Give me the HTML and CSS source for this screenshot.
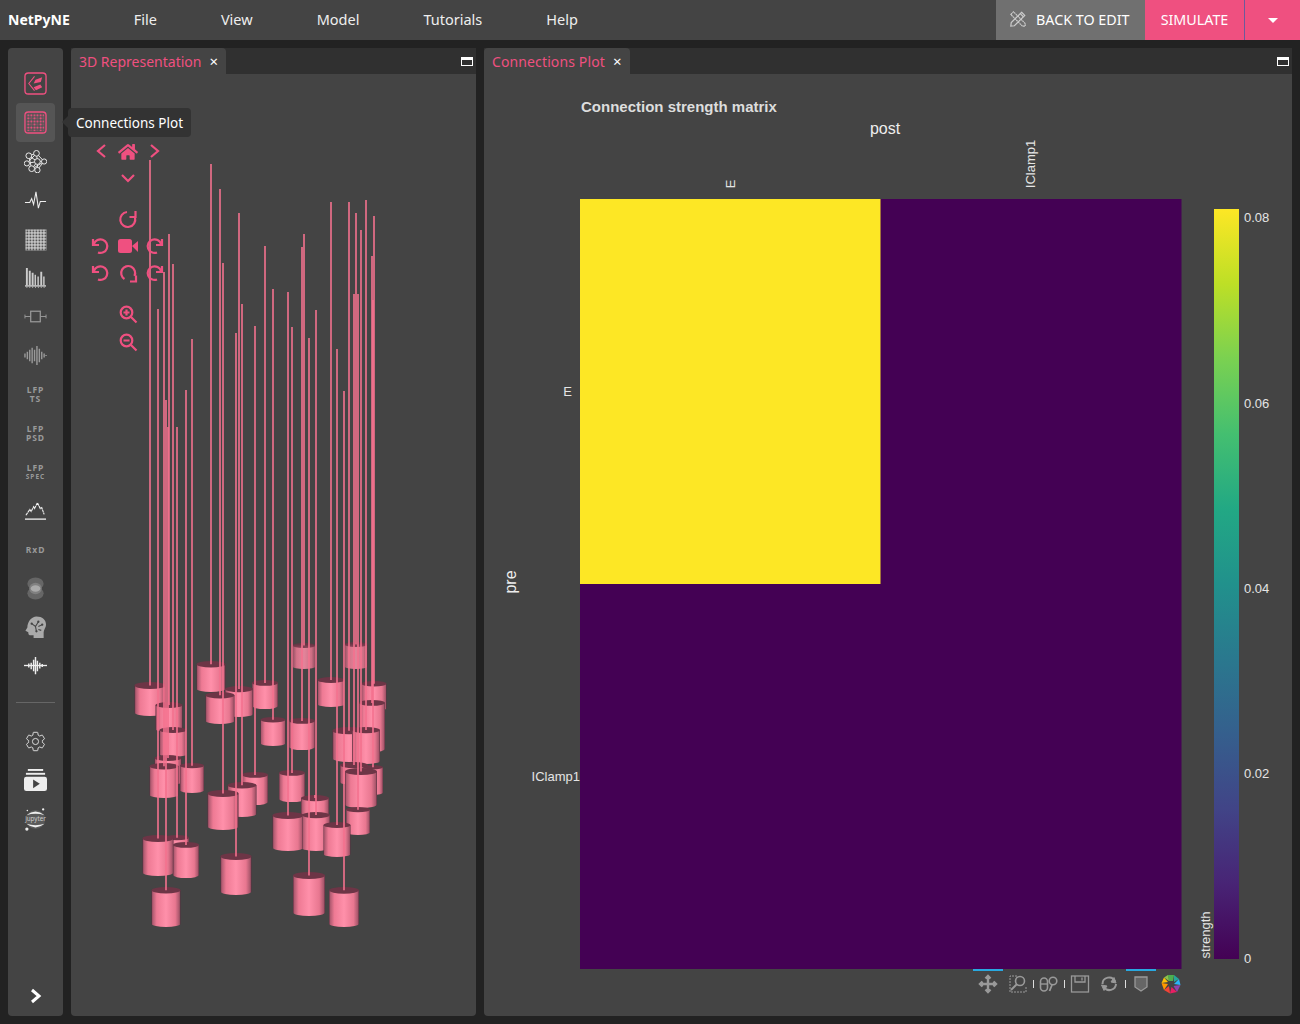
FILE: index.html
```html
<!DOCTYPE html>
<html lang="en">
<head>
  <meta charset="UTF-8">
  <meta name="viewport" content="width=device-width, initial-scale=1.0">
  <title>NetPyNE</title>
  <link rel="stylesheet" href="styles.css">
</head>
<body>
<header class="topbar">
  <nav class="menu">
    <span class="brand">NetPyNE</span>
    <span>File</span>
    <span>View</span>
    <span>Model</span>
    <span>Tutorials</span>
    <span>Help</span>
  </nav>
  <div class="actions">
    <div class="btn-edit">
      <svg class="edit-icon" viewBox="0 0 20 20">
        <g fill="none" stroke="#ccc" stroke-width="1.3">
          <path d="M2 5 L5 2 L18 15 L18 18 L15 18 Z" stroke-dasharray="2 .6"/>
          <path d="M14 2.5 L17.5 6 L6 17.5 L2 18 L2.5 14 Z"/>
          <path d="M12.5 4 L16 7.5"/>
        </g>
      </svg>
      BACK TO EDIT
    </div>
    <div class="btn-simulate">SIMULATE</div>
    <div class="btn-caret"><span class="caret"></span></div>
  </div>
</header>

<main class="workspace">
  <aside class="sidebar">
    <div class="side-item">
      <svg viewBox="0 0 24 24" class="side-icon"><rect x="1" y="1" width="22" height="22" rx="3.5" fill="none" stroke="#ef5080" stroke-width="1.4"/><path d="M11 4.500 L5 12 L11 19.500" fill="none" stroke="#ef5080" stroke-width="1.1"/><path d="M12 8 L19 5.500 L17.500 10.500 L10 12 Z M10 16 L17 13 L19 16 L12.500 19 Z" fill="#ef5080"/></svg>
    </div>
    <div class="side-item active">
      <svg viewBox="0 0 24 24" class="side-icon">
        <defs>
          <pattern id="dots" x="2.900" y="2.900" width="6.400" height="6.400" patternUnits="userSpaceOnUse">
            <path d="M1.600 .4 V2.800 M.4 1.600 H2.800 M4.800 .4 V2.800 M3.600 1.600 H6 M1.600 3.600 V6 M.4 4.800 H2.800" stroke="#ef5080" stroke-width="1"/>
            <circle cx="4.800" cy="4.800" r=".8" fill="none" stroke="#ef5080" stroke-width=".35"/>
          </pattern>
        </defs>
        <rect x="1" y="1" width="22" height="22" rx="3.5" fill="none" stroke="#ef5080" stroke-width="1.4"/>
        <rect x="2.900" y="2.900" width="18.200" height="18.200" fill="url(#dots)"/>
      </svg>
      <div class="tooltip">Connections Plot</div>
    </div>
    <div class="side-item">
      <svg viewBox="0 0 24 24" class="side-icon"><g fill="none" stroke="#eee" stroke-width="1"><path d="M5 6 L14 12 L8 20 L5 6 M13 3.5 L5 6 M13 3.5 L14 12 L21 12 L13 3.5 M3 14 L14 12 M3 14 L8 20 M3 14 L13 3.5 M14 20.500 L14 12 M14 20.500 L21 12 M8 20 L21 12"/><g fill="#444"><circle cx="5" cy="6" r="3"/><circle cx="13" cy="3.500" r="3"/><circle cx="21" cy="12" r="2.700"/><circle cx="14" cy="12" r="3"/><circle cx="3" cy="14" r="2.700"/><circle cx="8" cy="19.500" r="3"/><circle cx="14" cy="21" r="2.800"/></g></g></svg>
    </div>
    <div class="side-item">
      <svg viewBox="0 0 24 24" class="side-icon"><path d="M1 14 H6 L8 10 L10 16 L12.500 3 L15 20 L17 13 H23" fill="none" stroke="#eee" stroke-width="1.100"/></svg>
    </div>
    <div class="side-item">
      <svg viewBox="0 0 24 24" class="side-icon">
        <defs><pattern id="grid" width="3.130" height="3.130" patternUnits="userSpaceOnUse" x="1.500" y="1.500"><rect width="3.130" height="3.130" fill="#ddd"/><rect x="1.050" y="1.050" width="2.080" height="2.080" fill="#555"/></pattern></defs>
        <rect x="1.500" y="1.500" width="21.900" height="21.900" fill="url(#grid)"/>
      </svg>
    </div>
    <div class="side-item">
      <svg viewBox="0 0 24 24" class="side-icon"><path d="M2 20 V2 H4 V20 Z M5 20 V5 H7 V20 Z M8 20 V7 H10 V20 Z M11 20 V9 H12.500 V20 Z M14 20 V11 H15.500 V20 Z M17 20 V6 H19 V20 Z M20 20 V11 H21.500 V20 Z" fill="#ccc"/><path d="M1 20.800 H23" stroke="#eee" stroke-width="1.200"/><path d="M3 21 v2 M6 21 v2 M9 21 v2 M12 21 v2 M15 21 v2 M18 21 v2 M21 21 v2" stroke="#aaa"/></svg>
    </div>
    <div class="side-item dim">
      <svg viewBox="0 0 24 24" class="side-icon"><path d="M1 10 V14 M1 12 H7 M17 12 H23 M23 10 V14" stroke="#999" fill="none"/><rect x="7" y="6.500" width="10" height="11" fill="none" stroke="#999" stroke-width="1.300"/></svg>
    </div>
    <div class="side-item dim">
      <svg viewBox="0 0 24 24" class="side-icon"><path d="M1 10 V14 M3.500 8 V16 M6 6 V18 M8.500 4 V20 M11 6 V18 M13.500 2 V22 M16 5 V19 M18.500 8 V16 M21 10 V14 M23 11.500 V12.500" stroke="#999" stroke-width="1.500"/></svg>
    </div>
    <div class="side-item dim side-text"><span>LFP</span><span>TS</span></div>
    <div class="side-item dim side-text"><span>LFP</span><span>PSD</span></div>
    <div class="side-item dim side-text"><span>LFP</span><span class="tiny">SPEC</span></div>
    <div class="side-item">
      <svg viewBox="0 0 24 24" class="side-icon"><path d="M2 17 L6 11 L7.500 13 L10 8 L11 10 L14 4 L17 10 L18.500 9 L21 16" fill="none" stroke="#eee" stroke-width="1.200" stroke-dasharray="3 .5"/><path d="M1 21 H23" stroke="#eee" stroke-width="1.400"/></svg>
    </div>
    <div class="side-item dim side-text"><span>RxD</span></div>
    <div class="side-item dim">
      <svg viewBox="0 0 24 24" class="side-icon"><ellipse cx="12" cy="7" rx="8.500" ry="6.500" fill="#666"/><ellipse cx="12" cy="17" rx="8.500" ry="6.500" fill="#666"/><ellipse cx="12" cy="12" rx="6.500" ry="6" fill="#808080"/><ellipse cx="12" cy="12" rx="5" ry="3.500" fill="#aaa"/></svg>
    </div>
    <div class="side-item dim">
      <svg viewBox="0 0 24 24" class="side-icon"><path d="M13 0.500 C19 0.500 23 4 23 9 C23 12 20.500 14 20.500 17 L20.500 23 L10 23 L10 20 L6 20 C4.500 20 4.500 18 4.500 17 L1.500 15.500 L3.500 12 C3.500 6 8 0.500 13 0.500 Z" fill="#aaa"/><path d="M8 8 L12 11 L15 6 M12 11 L13 16 M15 11 L19 9 M15 14 L18 15" stroke="#444" stroke-width="1.100" fill="none"/><circle cx="8" cy="8" r="1.200" fill="#444"/><circle cx="15" cy="6" r="1.200" fill="#444"/><circle cx="13" cy="16" r="1.200" fill="#444"/><circle cx="19" cy="9" r="1.200" fill="#444"/></svg>
    </div>
    <div class="side-item">
      <svg viewBox="0 0 24 24" class="side-icon"><path d="M0 12 H24" stroke="#eee" stroke-width="1.400"/><path d="M5 10 V14 M7.500 9 V16 M10 6 V18 M12 3 V21 M14 7 V18 M16.500 9 V15 M19 10.500 V13.500" stroke="#eee" stroke-width="1.500"/></svg>
    </div>

    <div class="side-rule"></div>

    <div class="side-item">
      <svg viewBox="0 0 24 24" class="side-icon"><path d="M19.14 12.94c.04-.3.06-.61.06-.94 0-.32-.02-.64-.07-.94l2.03-1.58c.18-.14.23-.41.12-.61l-1.92-3.32c-.12-.22-.37-.29-.59-.22l-2.39.96c-.5-.38-1.03-.7-1.62-.94l-.36-2.54c-.04-.24-.24-.41-.48-.41h-3.84c-.24 0-.43.17-.47.41l-.36 2.54c-.59.24-1.13.57-1.62.94l-2.39-.96c-.22-.08-.47 0-.59.22L2.74 8.87c-.12.21-.08.47.12.61l2.03 1.58c-.05.3-.09.63-.09.94s.02.64.07.94l-2.03 1.58c-.18.14-.23.41-.12.61l1.92 3.32c.12.22.37.29.59.22l2.39-.96c.5.38 1.03.7 1.62.94l.36 2.54c.05.24.24.41.48.41h3.84c.24 0 .44-.17.47-.41l.36-2.54c.59-.24 1.13-.56 1.62-.94l2.39.96c.22.08.47 0 .59-.22l1.92-3.32c.12-.22.07-.47-.12-.61l-2.01-1.58z" fill="none" stroke="#eee" stroke-width=".9"/><circle cx="12" cy="12" r="3.200" fill="none" stroke="#eee" stroke-width=".9"/></svg>
    </div>
    <div class="side-item">
      <svg viewBox="0 0 24 24" class="side-icon"><rect x="4" y="0" width="16" height="2" fill="#eee"/><rect x="2" y="4" width="20" height="2" fill="#eee"/><rect x="0" y="8" width="24" height="15" rx="2.500" fill="#eee"/><path d="M9.500 11 L16.500 15.500 L9.500 20 Z" fill="#444"/></svg>
    </div>
    <div class="side-item">
      <svg viewBox="0 0 24 24" class="side-icon side-jupyter">
        <circle cx="12" cy="12" r="10" fill="#5a5a5a"/>
        <path d="M2.500 7.500 Q12 0 21.500 7.500 Q12 4.500 2.500 7.500 Z M2.500 16.500 Q12 24 21.500 16.500 Q12 19.500 2.500 16.500 Z" fill="#eee"/>
        <text x="12" y="14" class="jupyter-label" text-anchor="middle">jupyter</text>
        <circle cx="20" cy="1.500" r="1.200" fill="#eee"/><circle cx="3" cy="22" r="1.700" fill="#eee"/><circle cx="3.500" cy="2.500" r=".8" fill="#eee"/>
      </svg>
    </div>
    <div class="side-bottom">
      <svg viewBox="0 0 14 16" class="chevron"><path d="M3 2 L10 8 L3 14" fill="none" stroke="#fff" stroke-width="3"/></svg>
    </div>
  </aside>

  <section class="panel panel-left">
    <div class="tabstrip">
      <div class="tab">3D Representation <span class="tab-close">&times;</span></div>
      <span class="maximize"></span>
    </div>
    <div class="panel-body">
      <svg id="scene" class="canvas" viewBox="71 74 405 942">
        <defs>
          <linearGradient id="soma">
            <stop offset="0" stop-color="#5a3040"/>
            <stop offset=".04" stop-color="#b05a70"/>
            <stop offset=".18" stop-color="#ee7a94"/>
            <stop offset=".5" stop-color="#ff90aa"/>
            <stop offset=".82" stop-color="#e87790"/>
            <stop offset=".96" stop-color="#a8566b"/>
            <stop offset="1" stop-color="#5a3040"/>
          </linearGradient>
        </defs>
        <g id="cells"></g>
        <g class="ctl">
          <path d="M105 145 L98 151 L105 157"/>
          <path d="M151 145 L158 151 L151 157"/>
          <path d="M122 175 L128 181 L134 175"/>
          <path class="ctl-fill" transform="translate(118 143) scale(.0347)" d="M280.37 148.26L96 300.11V464a16 16 0 0 0 16 16l112.06-.29a16 16 0 0 0 15.92-16V368a16 16 0 0 1 16-16h64a16 16 0 0 1 16 16v95.64a16 16 0 0 0 16 16.05L464 480a16 16 0 0 0 16-16V300L295.67 148.26a12.19 12.19 0 0 0-15.3 0zM571.6 251.47L488 182.56V44.05a12 12 0 0 0-12-12h-56a12 12 0 0 0-12 12v72.61L318.47 43a48 48 0 0 0-61 0L4.34 251.47a12 12 0 0 0-1.6 16.9l25.5 31A12 12 0 0 0 45.15 301l235.22-193.74a12.19 12.19 0 0 1 15.3 0L530.9 301a12 12 0 0 0 16.9-1.6l25.5-31a12 12 0 0 0-1.7-16.93z"/>
          <g transform="translate(128 219)"><path d="M-1 -7 A7.500 7.500 0 1 0 7 -1.500"/><path d="M7.500 -8 V-2 H1.500"/></g>
          <g transform="translate(100 246)"><path d="M-6 -2 A6.800 6.800 0 1 1 -2 6.500"/><path d="M-7 -7 V-1 H-1"/></g>
          <g transform="translate(155 246) scale(-1 1)"><path d="M-6 -2 A6.800 6.800 0 1 1 -2 6.500"/><path d="M-7 -7 V-1 H-1"/></g>
          <g transform="translate(128 273)"><path d="M-3.500 6 A7 7 0 1 1 6.500 3"/><path d="M8 2.500 V8.500 H2"/></g>
          <g transform="translate(100 273)"><path d="M-6 -2 A6.800 6.800 0 1 1 -2 6.500"/><path d="M-7 -7 V-1 H-1"/></g>
          <g transform="translate(155 273) scale(-1 1)"><path d="M-6 -2 A6.800 6.800 0 1 1 -2 6.500"/><path d="M-7 -7 V-1 H-1"/></g>
          <rect class="ctl-fill" x="118" y="239" width="14" height="14" rx="2.500"/>
          <path class="ctl-fill" d="M132 246 L138 241 V252 Z"/>
          <g transform="translate(128 314)"><circle cx="-1.500" cy="-1.500" r="5.800"/><path d="M3 3 L8.500 8.500 M-4.500 -1.500 H1.500 M-1.500 -4.500 V1.500"/></g>
          <g transform="translate(128 342)"><circle cx="-1.500" cy="-1.500" r="5.800"/><path d="M3 3 L8.500 8.500 M-4.500 -1.500 H1.500"/></g>
        </g>
      </svg>
    </div>
  </section>

  <section class="panel panel-right">
    <div class="tabstrip">
      <div class="tab">Connections Plot <span class="tab-close">&times;</span></div>
      <span class="maximize"></span>
    </div>
    <div class="panel-body">
      <svg class="canvas" viewBox="484 74 808 942">
        <defs>
          <linearGradient id="viridis" x1="0" y1="1" x2="0" y2="0">
            <stop offset="0" stop-color="#440154"/><stop offset=".1" stop-color="#482475"/><stop offset=".2" stop-color="#414487"/>
            <stop offset=".3" stop-color="#355f8d"/><stop offset=".4" stop-color="#2a788e"/><stop offset=".5" stop-color="#21918c"/>
            <stop offset=".6" stop-color="#22a884"/><stop offset=".7" stop-color="#44bf70"/><stop offset=".8" stop-color="#7ad151"/>
            <stop offset=".9" stop-color="#bddf26"/><stop offset="1" stop-color="#fde725"/>
          </linearGradient>
        </defs>
        <rect x="580" y="199" width="601.500" height="770" fill="#440154"/>
        <rect x="580" y="199" width="300.500" height="385" fill="#fde725"/>
        <rect x="1214" y="209" width="25" height="750" fill="url(#viridis)"/>

        <text x="581" y="112" class="plot-title">Connection strength matrix</text>
        <text x="885" y="134" class="plot-axis" text-anchor="middle">post</text>
        <text transform="translate(516 582) rotate(-90)" class="plot-axis" text-anchor="middle">pre</text>
        <text transform="translate(734.500 184) rotate(-90)" class="plot-tick" text-anchor="middle">E</text>
        <text transform="translate(1035 164) rotate(-90)" class="plot-tick" text-anchor="middle">IClamp1</text>
        <text x="572" y="396" class="plot-tick" text-anchor="end">E</text>
        <text x="580" y="781" class="plot-tick" text-anchor="end">IClamp1</text>
        <text transform="translate(1210 935) rotate(-90)" class="plot-tick" text-anchor="middle">strength</text>
        <text x="1244" y="222" class="plot-tick">0.08</text>
        <text x="1244" y="408" class="plot-tick">0.06</text>
        <text x="1244" y="593" class="plot-tick">0.04</text>
        <text x="1244" y="778" class="plot-tick">0.02</text>
        <text x="1244" y="963" class="plot-tick">0</text>

        <rect x="973" y="969" width="30" height="2" fill="#29a8e0"/>
        <rect x="1126" y="969" width="30" height="2" fill="#29a8e0"/>
        <g class="modebar">
          <path d="M988 976 V992 M980 984 H996 M985.500 978.500 L988 976 L990.500 978.500 M985.500 989.500 L988 992 L990.500 989.500 M982.500 981.500 L980 984 L982.500 986.500 M993.500 981.500 L996 984 L993.500 986.500" stroke-width="2.400"/>
          <path d="M1017 976 H1010 V992 H1026 V986" stroke-width="1" stroke-dasharray="2 1"/>
          <circle cx="1020" cy="981" r="4.500" stroke-width="1.600"/>
          <path d="M1017 984 L1011 990" stroke-width="2"/>
          <path d="M1033.500 980 V988 M1064.500 980 V988 M1125.500 980 V988" stroke="#ddd" stroke-width="1"/>
          <rect x="1040.500" y="978" width="7" height="13" rx="3.500" stroke-width="1.600"/>
          <path d="M1041 984 H1047" stroke-width="1.400"/>
          <circle cx="1053" cy="981" r="3.800" stroke-width="1.600"/>
          <path d="M1052 985 L1049.500 991" stroke-width="1.800"/>
          <rect x="1071.500" y="976" width="17" height="16" stroke-width="1.300"/>
          <path d="M1075 976 V982 H1085 V976 M1082 977.500 V980.500" stroke-width="1.300"/>
          <path d="M1102.500 984 A6.500 6.500 0 0 1 1115 981.500 M1116 984 A6.500 6.500 0 0 1 1104 987" stroke-width="2"/>
          <path d="M1114 977.500 L1116 983 L1111 982 Z M1104 990.500 L1101.500 985 L1107 986 Z" class="modebar-fill"/>
          <path d="M1135 977 H1147 V987 L1141 991 L1135 987 Z" class="modebar-note" stroke-width="1.300"/>
        </g>
        <g transform="translate(1171 984)">
          <path d="M-3 -9 L3 -9 L2 -3 L-2 -3 Z" fill="#4caf50"/>
          <path d="M3 -9 L8 -5 L3 -2 Z" fill="#26a69a"/>
          <path d="M8 -5 L9.500 1 L3 0 Z" fill="#29b6f6"/>
          <path d="M9.500 1 L6 8 L2.500 2 Z" fill="#8e44ad"/>
          <path d="M6 8 L-1 9.500 L0.500 3 Z" fill="#e91e63"/>
          <path d="M-1 9.500 L-7 6 L-2 2 Z" fill="#f44336"/>
          <path d="M-7 6 L-9.500 -1 L-3 0 Z" fill="#ff9800"/>
          <path d="M-9.500 -1 L-7 -6.500 L-3 -2 Z" fill="#ffc107"/>
          <path d="M-7 -6.500 L-3 -9 L-2 -3 Z" fill="#8bc34a"/>
          <circle r="3" fill="#444"/>
        </g>
      </svg>
    </div>
  </section>
</main>
<script src="scene.js"></script>
</body>
</html>
```

FILE: styles.css
```css
* {
  box-sizing: border-box;
}
html, body {
  height: 100%;
}
body {
  margin: 0;
  display: flex;
  flex-direction: column;
  background-color: #222;
  color: #fff;
  font-family: "Noto Sans", Arial, sans-serif;
  font-size: 14px;
  overflow: hidden;
}

/* top bar */
.topbar {
  display: flex;
  justify-content: space-between;
  height: 40px;
  background-color: #444;
}
.menu {
  display: flex;
  align-items: center;
  gap: 64px;
  padding: 0 0 2px 8px;
  font-size: 14.5px;
  color: #eee;
}
.brand {
  font-size: 14px;
  font-weight: 700;
  color: #fff;
}
.actions {
  display: flex;
  font-size: 14.3px;
}
.btn-edit {
  display: flex;
  align-items: center;
  gap: 9px;
  width: 149px;
  padding: 0 0 2px 13px;
  background-color: #707070;
  color: #fff;
}
.edit-icon {
  width: 18px;
  height: 18px;
}
.btn-simulate {
  display: flex;
  align-items: center;
  justify-content: center;
  width: 99px;
  padding-bottom: 2px;
  background-color: #ef5080;
  color: #fff;
}
.btn-caret {
  display: flex;
  align-items: center;
  justify-content: center;
  flex: 0 0 56px;
  border-left: 1px solid #6c5a9c;
  background-color: #ef5080;
}
.caret {
  width: 0;
  height: 0;
  border-left: 5px solid transparent;
  border-right: 5px solid transparent;
  border-top: 5px solid #fff;
}

/* main area */
.workspace {
  flex: 1;
  display: flex;
  gap: 8px;
  min-height: 0;
  padding: 8px;
}

/* left icon column */
.sidebar {
  flex: 0 0 55px;
  display: flex;
  flex-direction: column;
  align-items: center;
  padding-top: 16.5px;
  background-color: #444;
  border-radius: 4px;
}
.side-item {
  position: relative;
  display: flex;
  flex-direction: column;
  align-items: center;
  justify-content: center;
  flex: 0 0 38.8px;
  width: 39px;
  border-radius: 4px;
}
.side-item.active {
  background-color: #555;
}
.side-item.dim {
  color: #999;
}
.side-icon {
  width: 23px;
  height: 23px;
}
.side-text {
  font-size: 8.5px;
  font-weight: 700;
  line-height: 9px;
  letter-spacing: 1px;
}
.side-text .tiny {
  font-size: 6.5px;
}
.jupyter-label {
  font-family: "Noto Sans", Arial, sans-serif;
  font-size: 6.5px;
  fill: #ccc;
}
.side-rule {
  flex: 0 0 1px;
  width: 39px;
  margin: 17px 0 19px;
  background-color: #666;
}
.side-bottom {
  margin-top: auto;
  padding-bottom: 12px;
}
.chevron {
  display: block;
  width: 14px;
  height: 16px;
}
.tooltip {
  position: absolute;
  left: 52px;
  top: 5px;
  height: 29px;
  padding: 0 8px;
  font-size: 13.5px;
  line-height: 31px;
  white-space: nowrap;
  background-color: #333;
  border-radius: 4px;
  color: #fff;
  z-index: 5;
}
.tooltip::before {
  content: "";
  position: absolute;
  left: -6px;
  top: 8px;
  border-top: 6px solid transparent;
  border-bottom: 6px solid transparent;
  border-right: 6px solid #333;
}

/* panels */
.panel {
  display: flex;
  flex-direction: column;
  min-width: 0;
}
.panel-left {
  flex: 0 0 405px;
}
.panel-right {
  flex: 1;
}
.panel-right .tab {
  letter-spacing: .12px;
}
.tabstrip {
  position: relative;
  display: flex;
  flex: 0 0 26px;
  background-color: #303030;
}
.tab {
  display: flex;
  align-items: center;
  gap: 8px;
  padding: 0 8px;
  background-color: #444;
  border-radius: 4px 4px 0 0;
  color: #ef5080;
  white-space: nowrap;
}
.tab-close {
  color: #fff;
  font-size: 15px;
}
.maximize {
  position: absolute;
  right: 3px;
  top: 9px;
  width: 12px;
  height: 9px;
  border: 1.500px solid #fff;
  border-top-width: 3px;
}
.panel-body {
  flex: 1;
  min-height: 0;
  background-color: #444;
  border-radius: 0 0 4px 4px;
}
.canvas {
  display: block;
  width: 100%;
  height: 100%;
}

/* 3D scene */
.cell-line {
  stroke: #f4728f;
  stroke-width: 1.600;
}
.cell-top {
  fill: #6d3546;
}
.cell-far {
  opacity: .85;
}
.ctl {
  fill: none;
  stroke: #ef5080;
  stroke-width: 2.200;
}
.ctl-fill {
  fill: #ef5080;
  stroke: none;
}

/* plot */
.plot-title {
  font-family: "Liberation Sans", Arial, sans-serif;
  font-size: 15px;
  font-weight: 700;
  fill: #ddd;
}
.plot-axis {
  font-family: "Liberation Sans", Arial, sans-serif;
  font-size: 16px;
  fill: #eee;
}
.plot-tick {
  font-family: "Liberation Sans", Arial, sans-serif;
  font-size: 13px;
  fill: #e4e4e4;
}
.modebar {
  fill: none;
  stroke: #999;
}
.modebar-fill {
  fill: #999;
}
.modebar-note {
  fill: #666;
}
```

FILE: scene.js
```js
// x, y of the soma top, soma width, soma bottom, y where the neurite ends
const cells = [
  [304, 643, 23, 669, 234],
  [356, 642, 23, 669, 213],
  [211, 661, 29, 692, 164],
  [331, 677, 27, 707, 202],
  [265, 680, 26, 709, 246],
  [374, 681, 25, 711, 216],
  [150, 682, 31, 716, 160],
  [239, 686, 28, 717, 213],
  [220, 692, 29, 724, 189],
  [372, 700, 26, 752, 256],
  [169, 702, 27, 732, 234],
  [273, 717, 25, 746, 289],
  [302, 718, 26, 750, 247],
  [173, 727, 27, 757, 264],
  [349, 727, 33, 762, 202],
  [366, 727, 28, 764, 200],
  [168, 755, 27, 785, 427],
  [354, 762, 28, 785, 294],
  [164, 763, 29, 798, 272],
  [192, 763, 24, 793, 339],
  [373, 765, 20, 795, 300],
  [361, 768, 32, 808, 230],
  [292, 770, 26, 802, 327],
  [255, 772, 26, 805, 326],
  [242, 782, 29, 817, 304],
  [223, 790, 31, 830, 263],
  [315, 795, 28, 827, 795],
  [358, 807, 24, 835, 294],
  [288, 812, 31, 851, 292],
  [316, 812, 28, 851, 310],
  [337, 822, 27, 857, 349],
  [177, 835, 24, 870, 427],
  [158, 835, 31, 876, 309],
  [186, 842, 26, 878, 390],
  [236, 853, 31, 895, 333],
  [309, 872, 32, 916, 338],
  [166, 887, 29, 927, 400],
  [344, 887, 30, 927, 391]
];

const ns = 'http://www.w3.org/2000/svg';
const group = document.getElementById('cells');

const add = (name, attrs) => {
  const el = document.createElementNS(ns, name);
  Object.keys(attrs).forEach(key => el.setAttribute(key, attrs[key]));
  group.appendChild(el);
};

cells.forEach(([x, y, w, bottom, tip]) => {
  const r = w / 2;
  const ry = w / 9;
  // the two somas furthest back are a bit washed out
  const far = y < 650 ? ' cell-far' : '';
  add('path', {
    d: `M${x - r} ${y + ry} V${bottom - ry} A${r} ${ry} 0 0 0 ${x + r} ${bottom - ry} V${y + ry} Z`,
    fill: 'url(#soma)',
    class: far
  });
  add('ellipse', { cx: x, cy: y + ry, rx: r, ry: ry, class: 'cell-top' + far });
  add('line', { x1: x, y1: tip, x2: x, y2: y + ry, class: 'cell-line' });
});
```
